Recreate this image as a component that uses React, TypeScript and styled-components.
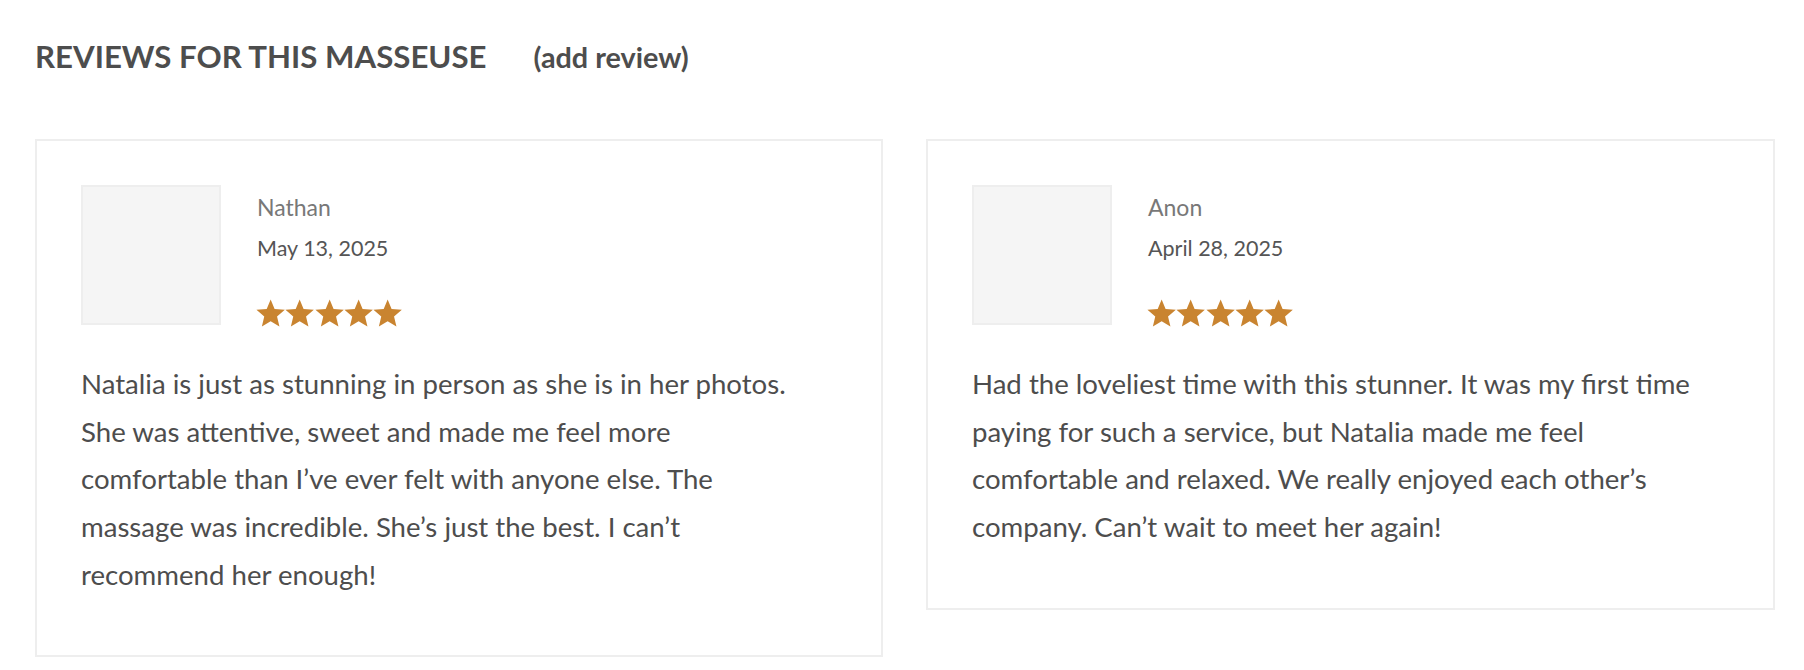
import React from "react";
import styled, { createGlobalStyle } from "styled-components";

const GlobalStyle = createGlobalStyle`
  html, body { margin: 0; padding: 0; background: #ffffff; }
  body { font-family: Lato, "Open Sans", "Noto Sans", sans-serif; color: #4a4a4a; }
  * { box-sizing: border-box; }
`;

const Page = styled.div`
  padding: 38px 30px 0 35px;
`;

const HeaderRow = styled.div`
  display: flex;
  align-items: baseline;
  gap: 47px;
`;

const Title = styled.h2`
  margin: 0;
  font-size: 31.2px;
  line-height: 1.2;
  font-weight: 700;
  text-transform: uppercase;
  color: #4d4d4d;
`;

const AddLink = styled.a`
  font-size: 28.8px;
  font-weight: 700;
  color: #4d4d4d;
  text-decoration: none;
  cursor: pointer;
`;

const Grid = styled.div`
  display: grid;
  grid-template-columns: 848px 849px;
  column-gap: 43px;
  align-items: start;
  margin-top: 64px;
`;

const Card = styled.article`
  border: 2px solid #eeeeee;
  padding: 44px 44px 57px 44px;
  background: #ffffff;
`;

const Top = styled.div`
  display: flex;
  gap: 36px;
`;

const Avatar = styled.div`
  width: 140px;
  height: 140px;
  flex: none;
  background: #f5f5f5;
  border: 2px solid #eeeeee;
`;

const Info = styled.div`
  display: flex;
  flex-direction: column;
  padding-top: 8px;
`;

const Name = styled.div`
  font-size: 23px;
  line-height: 28px;
  color: #787878;
`;

const DateText = styled.div`
  margin-top: 14px;
  font-size: 21.5px;
  line-height: 26px;
  color: #555555;
`;

const Stars = styled.div`
  display: flex;
  margin-top: 38px;
  margin-left: -1px;
`;

const Body = styled.p`
  margin: 33px 0 0 0;
  max-width: 728px;
  font-size: 27.6px;
  line-height: 47.52px;
  color: #4d4d4d;
`;

const Star = () => (
  <svg width="29.3" height="28" viewBox="0 0 29.3 28" aria-hidden="true">
    <polygon
      fill="#c98430"
      points="14.65,0.5 18.6,9.99 28.85,10.82 21.04,17.51 23.43,27.51 14.65,22.15 5.87,27.51 8.26,17.51 0.45,10.82 10.7,9.99"
    />
  </svg>
);

type Review = { name: string; date: string; text: string };

const reviews: Review[] = [
  {
    name: "Nathan",
    date: "May 13, 2025",
    text:
      "Natalia is just as stunning in person as she is in her photos. She was attentive, sweet and made me feel more comfortable than I\u2019ve ever felt with anyone else. The massage was incredible. She\u2019s just the best. I can\u2019t recommend her enough!",
  },
  {
    name: "Anon",
    date: "April 28, 2025",
    text:
      "Had the loveliest time with this stunner. It was my first time paying for such a service, but Natalia made me feel comfortable and relaxed. We really enjoyed each other\u2019s company. Can\u2019t wait to meet her again!",
  },
];

const ReviewCard = ({ r }: { r: Review }) => (
  <Card>
    <Top>
      <Avatar />
      <Info>
        <Name>{r.name}</Name>
        <DateText>{r.date}</DateText>
        <Stars>
          {[0, 1, 2, 3, 4].map((i) => (
            <Star key={i} />
          ))}
        </Stars>
      </Info>
    </Top>
    <Body>{r.text}</Body>
  </Card>
);

export default function App() {
  return (
    <Page>
      <GlobalStyle />
      <HeaderRow>
        <Title>Reviews for this masseuse</Title>
        <AddLink>(add review)</AddLink>
      </HeaderRow>
      <Grid>
        {reviews.map((r) => (
          <ReviewCard key={r.name} r={r} />
        ))}
      </Grid>
    </Page>
  );
}
